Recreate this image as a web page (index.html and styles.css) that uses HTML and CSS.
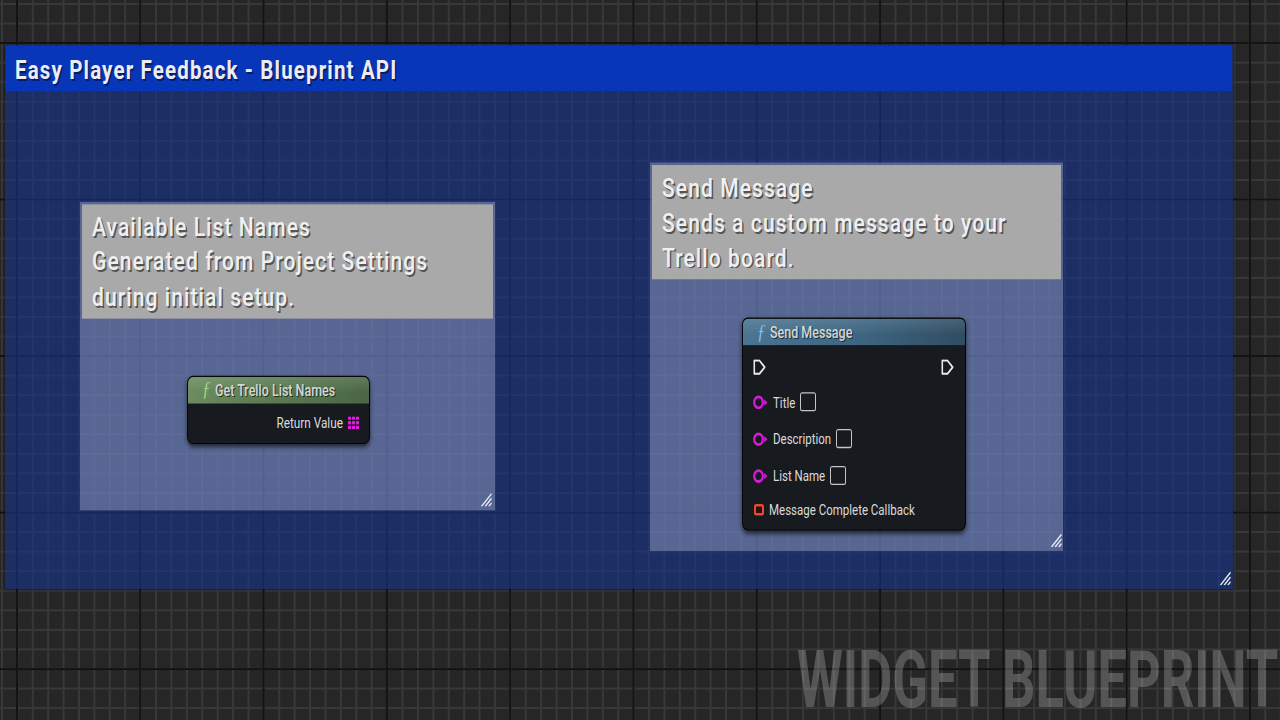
FILE: index.html
```html
<!doctype html>
<html lang="en">
  <head>
    <meta charset="UTF-8" />
    <meta name="viewport" content="width=device-width, initial-scale=1.0" />
    <title>Easy Player Feedback - Blueprint API</title>
    <link rel="stylesheet" href="styles.css">
  </head>
  <body>
    <div class="stage">
      <!-- main comment -->
      <section class="comment comment-main">
        <header class="comment-bar">Easy Player Feedback - Blueprint API</header>
        <svg class="grip" viewBox="0 0 12 12"><path d="M1 12 L12 1 M5 12 L12 5 M9 12 L12 9" /></svg>
      </section>

      <section class="comment comment-sub sub-left">
        <div class="note">Available List Names<br>Generated from Project Settings<br>during initial setup.</div>
        <svg class="grip" viewBox="0 0 12 12"><path d="M1 12 L12 1 M5 12 L12 5 M9 12 L12 9" /></svg>
      </section>

      <section class="comment comment-sub sub-right">
        <div class="note">Send Message<br>Sends a custom message to your<br>Trello board.</div>
        <svg class="grip" viewBox="0 0 12 12"><path d="M1 12 L12 1 M5 12 L12 5 M9 12 L12 9" /></svg>
      </section>

      <!-- nodes -->
      <div class="node node-get">
        <div class="node-head head-pure"><span class="fn">ƒ</span>Get Trello List Names</div>
        <div class="node-body">
          <div class="pin-out">
            Return Value
            <svg class="array-pin" viewBox="0 0 11 10">
              <rect x="0" y="0" width="3" height="2.6" />
              <rect x="4" y="0" width="3" height="2.6" />
              <rect x="8" y="0" width="3" height="2.6" />
              <rect x="0" y="3.7" width="3" height="2.6" />
              <rect x="4" y="3.7" width="3" height="2.6" />
              <rect x="8" y="3.7" width="3" height="2.6" />
              <rect x="0" y="7.4" width="3" height="2.6" />
              <rect x="4" y="7.4" width="3" height="2.6" />
              <rect x="8" y="7.4" width="3" height="2.6" />
            </svg>
          </div>
        </div>
      </div>

      <div class="node node-send">
        <div class="node-head head-func"><span class="fn">ƒ</span>Send Message</div>
        <div class="node-body">
          <div class="exec-row">
            <svg class="exec" viewBox="0 0 12 12"><path d="M1 1 H6 L11 6 L6 11 H1 Z" /></svg>
            <svg class="exec" viewBox="0 0 12 12"><path d="M1 1 H6 L11 6 L6 11 H1 Z" /></svg>
          </div>
          <div class="pin-row">
            <svg class="str-pin" viewBox="0 0 15 12"><circle cx="5.5" cy="6" r="4.3" /><polygon points="11.2,3.4 14.4,6 11.2,8.6" /></svg>
            <span>Title</span><span class="check"></span>
          </div>
          <div class="pin-row">
            <svg class="str-pin" viewBox="0 0 15 12"><circle cx="5.5" cy="6" r="4.3" /><polygon points="11.2,3.4 14.4,6 11.2,8.6" /></svg>
            <span>Description</span><span class="check"></span>
          </div>
          <div class="pin-row">
            <svg class="str-pin" viewBox="0 0 15 12"><circle cx="5.5" cy="6" r="4.3" /><polygon points="11.2,3.4 14.4,6 11.2,8.6" /></svg>
            <span>List Name</span><span class="check"></span>
          </div>
          <div class="pin-row last">
            <span class="delegate"></span>
            <span>Message Complete Callback</span>
          </div>
        </div>
      </div>

      <div class="watermark">WIDGET BLUEPRINT</div>
    </div>
  </body>
</html>
```

FILE: styles.css
```css
/* base */
* {
  box-sizing: border-box;
  margin: 0;
  padding: 0;
}

body {
  width: 1280px;
  height: 720px;
  overflow: hidden;
  background: #262626;
  font-family: Roboto, "Liberation Sans", sans-serif;
  color: #dcdcdc;
}

/* graph canvas, squashed grid -> stretched vertically */
.stage {
  position: relative;
  width: 1280px;
  height: 568px;
  overflow: hidden;
  transform: scaleY(1.2695);
  transform-origin: 0 0;
  background-color: #262626;
  background-image:
    linear-gradient(90deg, #131313 2px, transparent 2px),
    linear-gradient(180deg, #131313 1.6px, transparent 1.6px),
    linear-gradient(90deg, #383838 1.5px, transparent 1.5px),
    linear-gradient(180deg, #383838 1.3px, transparent 1.3px);
  background-size: 123.3px 100%, 100% 123.3px, 15.41px 100%, 100% 15.41px;
  background-position: 16px 0, 0 33.1px, 1px 0, 0 2.4px;
}

/* comment boxes */
.comment {
  position: absolute;
  padding: 1px;
}

.comment-main {
  left: 5px;
  top: 35.4px;
  width: 1228px;
  height: 428.6px;
  background: rgba(22, 52, 140, 0.6);
  box-shadow: 0 1px 3px rgba(0, 0, 0, 0.5);
}

.comment-bar {
  display: flex;
  align-items: center;
  height: 35.4px;
  padding: 2px 0 0 9px;
  background: #0736b8;
  color: #ececf2;
  font-size: 20.5px;
  font-weight: 700;
  letter-spacing: 1.15px;
  text-shadow: 1.5px 1.5px 0 rgba(0, 0, 0, 0.45);
}

.comment-sub {
  padding: 1.6px 2px;
  background: rgba(225, 232, 255, 0.3);
}

.sub-left {
  left: 80px;
  top: 159.1px;
  width: 415px;
  height: 243.4px;
}

.sub-right {
  left: 650px;
  top: 128.4px;
  width: 413px;
  height: 305.6px;
}

.note {
  height: 90.2px;
  padding: 5px 10px 0;
  background: #a9a9a9;
  color: #f0f0f0;
  font-size: 21px;
  font-weight: 500;
  line-height: 27.6px;
  letter-spacing: 1.1px;
  text-shadow: 1.5px 1.5px 0 rgba(0, 0, 0, 0.5);
}

.grip {
  position: absolute;
  right: 2px;
  bottom: 3px;
  width: 12px;
  height: 11px;
}

.grip path {
  stroke: #e6e9f2;
  stroke-width: 1.4;
  fill: none;
}

.sub-left .grip {
  right: 3px;
}

.sub-right .grip {
  right: 1px;
  bottom: 2.5px;
}

/* blueprint nodes */
.node {
  position: absolute;
  border: 1px solid #060606;
  border-radius: 6px;
  background: rgba(20, 22, 25, 0.95);
  box-shadow: 0 2px 4px rgba(0, 0, 0, 0.6);
}

.node-get {
  left: 187px;
  top: 296.2px;
  width: 183px;
  height: 53.6px;
}

.node-send {
  left: 742px;
  top: 250px;
  width: 224px;
  height: 167.5px;
}

.node-head {
  display: flex;
  align-items: center;
  height: 20.5px;
  padding-left: 14px;
  border-radius: 5px 5px 0 0;
  font-size: 12.5px;
  font-weight: 500;
  color: #d6d6d6;
  text-shadow: 1px 1px 0 rgba(0, 0, 0, 0.6);
}

.head-pure {
  background: linear-gradient(180deg, rgba(255, 255, 255, 0.12), rgba(255, 255, 255, 0) 60%),
    linear-gradient(90deg, #6a8c5e, #567650 60%, #4a6645);
}

.head-func {
  height: 21.3px;
  background: linear-gradient(180deg, rgba(255, 255, 255, 0.12), rgba(255, 255, 255, 0) 60%),
    linear-gradient(90deg, #4b7591, #3d6480 55%, #2f4d62);
}

.fn {
  width: 13px;
  font-family: "Liberation Serif", serif;
  font-style: italic;
  font-size: 17px;
  text-shadow: none;
}

.head-pure .fn {
  color: #9ed48a;
}

.head-func .fn {
  color: #7cc0f0;
}

.node-get .node-body {
  display: flex;
  align-items: center;
  justify-content: flex-end;
  height: 31px;
  padding-right: 10px;
}

.pin-out {
  display: flex;
  align-items: center;
  gap: 5px;
  font-size: 11.8px;
  color: #dadada;
}

.array-pin {
  width: 11px;
  height: 10px;
}

.array-pin rect {
  fill: #e21ae2;
}

.node-send .node-body {
  padding-top: 4px;
}

.exec-row {
  display: flex;
  justify-content: space-between;
  align-items: center;
  height: 26px;
  padding: 0 11px 0 10px;
}

.exec {
  width: 13px;
  height: 12.5px;
}

.exec path {
  fill: none;
  stroke: #ececec;
  stroke-width: 1.5;
  stroke-linejoin: round;
}

.pin-row {
  display: flex;
  align-items: center;
  gap: 5px;
  height: 29px;
  padding-left: 10px;
  font-size: 11.5px;
  color: #dadada;
}

.pin-row.last {
  height: 24.5px;
}

.str-pin {
  width: 15px;
  height: 12px;
}

.str-pin circle {
  fill: none;
  stroke: #d81ad8;
  stroke-width: 2.2;
}

.str-pin polygon {
  fill: #d81ad8;
}

.check {
  width: 16px;
  height: 15px;
  border: 1.5px solid #c4c4c4;
  border-radius: 2px;
}

.delegate {
  width: 10px;
  height: 9.5px;
  margin-left: 1px;
  border: 2px solid #e84a30;
  border-radius: 2px;
  background: #2a1210;
}

/* watermark, condensed look: narrow font stretched upward */
.watermark {
  position: absolute;
  left: 797px;
  top: 507.5px;
  font-size: 52.4px;
  font-weight: 700;
  line-height: 0.9;
  white-space: nowrap;
  color: rgba(255, 255, 255, 0.22);
  transform: scaleY(1.2);
  transform-origin: 0 0;
}
```
